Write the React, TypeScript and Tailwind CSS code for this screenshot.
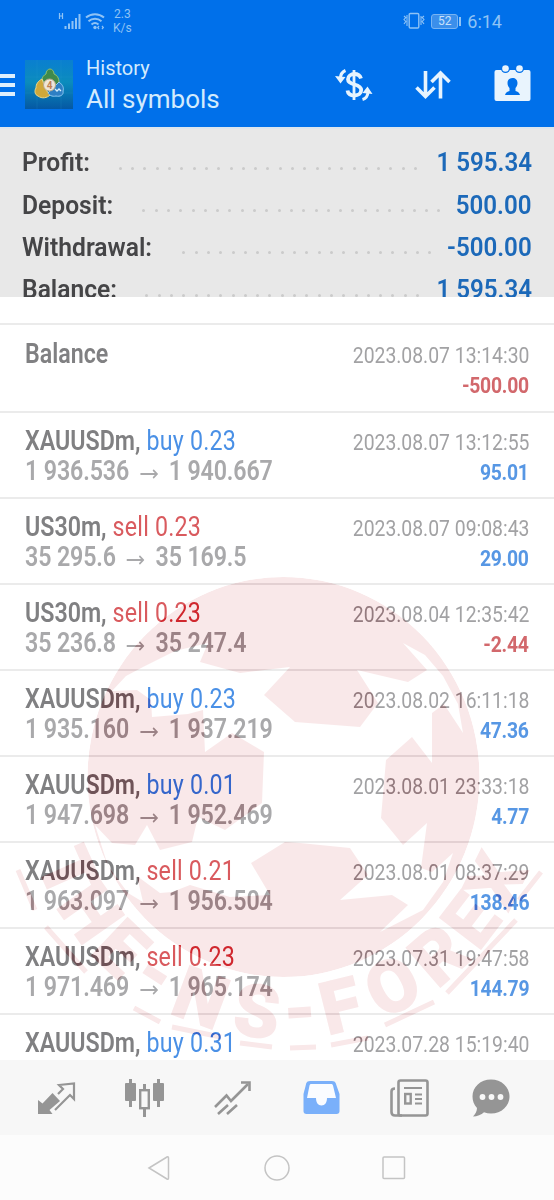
import type { ReactNode } from "react";

const summary = [
  { label: "Profit:", value: "1 595.34", dots: 25, end: "mr-[16px]" },
  { label: "Deposit:", value: "500.00", dots: 25, end: "mr-[13px]" },
  { label: "Withdrawal:", value: "-500.00", dots: 21, end: "mr-[13px]" },
  { label: "Balance:", value: "1 595.34", dots: 23, end: "mr-[14px]" },
];

type Deal = {
  symbol: string;
  side?: "buy" | "sell";
  volume?: string;
  from?: string;
  to?: string;
  time: string;
  profit?: string;
};

const deals: Deal[] = [
  { symbol: "Balance", time: "2023.08.07 13:14:30", profit: "-500.00" },
  { symbol: "XAUUSDm,", side: "buy", volume: "0.23", from: "1 936.536", to: "1 940.667", time: "2023.08.07 13:12:55", profit: "95.01" },
  { symbol: "US30m,", side: "sell", volume: "0.23", from: "35 295.6", to: "35 169.5", time: "2023.08.07 09:08:43", profit: "29.00" },
  { symbol: "US30m,", side: "sell", volume: "0.23", from: "35 236.8", to: "35 247.4", time: "2023.08.04 12:35:42", profit: "-2.44" },
  { symbol: "XAUUSDm,", side: "buy", volume: "0.23", from: "1 935.160", to: "1 937.219", time: "2023.08.02 16:11:18", profit: "47.36" },
  { symbol: "XAUUSDm,", side: "buy", volume: "0.01", from: "1 947.698", to: "1 952.469", time: "2023.08.01 23:33:18", profit: "4.77" },
  { symbol: "XAUUSDm,", side: "sell", volume: "0.21", from: "1 963.097", to: "1 956.504", time: "2023.08.01 08:37:29", profit: "138.46" },
  { symbol: "XAUUSDm,", side: "sell", volume: "0.23", from: "1 971.469", to: "1 965.174", time: "2023.07.31 19:47:58", profit: "144.79" },
  { symbol: "XAUUSDm,", side: "buy", volume: "0.31", time: "2023.07.28 15:19:40" },
];

function StatusBar() {
  return (
    <div className="flex h-[42px] items-center pl-[58px] pr-[52px] text-[#8fc3f5]">
      <svg width="52" height="20" viewBox="0 0 52 20" fill="none" stroke="currentColor">
        <path d="M1.5 2v6M4.5 2v6M1.5 5h3" strokeWidth="1.2" />
        <path d="M7.5 15v3M11 12.5V18M14.5 10v8M18 7v11M21.5 3v15" strokeWidth="2" />
        <path d="M28 6.5a14 14 0 0 1 18 0M30.5 10.2a10 10 0 0 1 13 0M33.5 13.5a5.500 5.500 0 0 1 7 0" strokeWidth="2" />
        <circle cx="37" cy="16.500" r="1.700" fill="currentColor" stroke="none" />
        <path d="M41 15l-1.300 1.500L41 18M44 15l1.300 1.500L44 18" strokeWidth="1.200" />
      </svg>
      <div className="ml-[3px] text-[12px] leading-[14px]">
        <div className="pl-px">2.3</div>
        <div>K/s</div>
      </div>
      <div className="flex-1" />
      <svg width="22" height="18" viewBox="0 0 22 18" fill="none" stroke="currentColor" strokeWidth="1.400">
        <rect x="6.200" y="1.500" width="9.600" height="14.500" rx="1.200" />
        <path d="M1 4l1.800 1.500L1 7.500l1.800 2L1 12M4 3v11M21 4l-1.800 1.500 1.800 2-1.800 2L21 12M18 4v9" strokeWidth="1.100" />
      </svg>
      <div className="ml-[6px] flex items-center">
        <div className="flex h-[15px] w-[27px] items-center justify-center rounded-[3px] border border-[#78b4f3] bg-[#3b8feb] text-[12px] leading-none text-[#c8e2fb]">
          52
        </div>
        <div className="ml-[1px] h-[9px] w-[2px] bg-[#8fc3f5]" />
      </div>
      <span className="ml-[6px] text-[18px]">6:14</span>
    </div>
  );
}

function AppLogo() {
  return (
    <svg width="48" height="49" viewBox="0 0 48 49">
      <defs>
        <linearGradient id="logo-bg" x1="0" y1="0" x2="0" y2="1">
          <stop offset="0" stopColor="#0a7fd0" />
          <stop offset="0.45" stopColor="#0b8cbd" />
          <stop offset="1" stopColor="#0558a3" />
        </linearGradient>
      </defs>
      <rect width="48" height="49" fill="url(#logo-bg)" />
      <path d="M0 17h48M0 33h48M12 0v49M36 0v49" stroke="#2d9fd3" strokeWidth="0.5" opacity="0.35" />
      <path d="M17 20c0-3 2-5 4-6 0-3 2-5 4-5s4 2 4 5c3 1 5 4 5 8l-4 5-9-4z" fill="#3f8a4b" stroke="#8fc06f" strokeWidth="1" />
      <path d="M17 19c-4 2-6 5-6 9-2 3-1 7 2 8 4 3 9 2 12-1l-4-5z" fill="#cfa83a" stroke="#ecd98a" strokeWidth="1" />
      <path d="M34 22c4 3 5 6 4 9 1 4-3 6-7 5-4 1-7-1-8-3l6-6z" fill="#2e7fc4" stroke="#8ec9f2" strokeWidth="1" />
      <circle cx="24.500" cy="25" r="6" fill="#efe6d8" stroke="#b9a98c" strokeWidth="1" />
      <text x="24.500" y="28.500" textAnchor="middle" fontSize="10" fontWeight="700" fill="#c08055">4</text>
      <path d="M30 29l2 2 2-2 2 2" stroke="#d7effc" strokeWidth="1.300" fill="none" />
    </svg>
  );
}

function Header() {
  return (
    <header className="h-[127px] bg-[#0070ea]">
      <StatusBar />
      <div className="flex h-[85px] items-center">
        <div className="mt-px flex w-[15px] flex-col gap-[5px]">
          <div className="h-1 bg-[#deeffd]" />
          <div className="h-1 bg-[#deeffd]" />
          <div className="h-1 bg-[#deeffd]" />
        </div>
        <div className="ml-[10px]">
          <AppLogo />
        </div>
        <div className="ml-[13px] flex flex-1 flex-col whitespace-nowrap text-[#d3ebfd]">
          <span className="text-[20px] leading-[28px]">History</span>
          <span className="text-[26px] leading-[34px]">All symbols</span>
        </div>
        <svg className="mr-[42px]" width="38" height="34" viewBox="0 0 38 34" fill="none" stroke="#e6f3fe">
          <path d="M26 10.500c-1-3-3.500-4.500-6.500-4.500-3.500 0-6.500 2-6.500 5.200 0 3.300 3 4.300 6.500 5.300 3.600 1 6.700 2 6.700 5.600 0 3.400-3 5.400-6.700 5.400-3.700 0-6.500-1.800-7-5" strokeWidth="3.800" />
          <path d="M19 2v30" strokeWidth="2.800" />
          <path d="M10.500 2.500C7 4 5.500 6.500 5.300 10.500M27.500 31.500c3.500-1 5.300-3.500 5.500-7.500" strokeWidth="3" />
          <path d="M0 8l10.500 1-5 6.500zM27.500 25l10 1-5-7.500z" fill="#e6f3fe" stroke="none" />
        </svg>
        <svg className="mr-[43px]" width="36" height="32" viewBox="0 0 36 32" fill="none" stroke="#e6f3fe" strokeWidth="3.600">
          <path d="M10.500 2v26M1.500 18.500l9 9 9-9M25.500 29.500V4M16.500 13l9-9 9 9" />
        </svg>
        <svg className="mr-[23px] -mt-1" width="37" height="37" viewBox="0 0 37 37">
          <rect x="0.500" y="6" width="36" height="31" rx="2" fill="#e9f4fd" />
          <circle cx="11.500" cy="4.500" r="4.600" fill="#0070ea" />
          <circle cx="25.500" cy="4.500" r="4.600" fill="#0070ea" />
          <circle cx="11.500" cy="4.500" r="3.300" fill="#e9f4fd" />
          <circle cx="25.500" cy="4.500" r="3.300" fill="#e9f4fd" />
          <path d="M18.500 14c3 0 5 2 5 5 0 2-.8 3.800-2 5v3c2 .5 4 1.500 4.500 4H11c.5-2.500 2.500-3.500 4.500-4v-3c-1.200-1.200-2-3-2-5 0-3 2-5 5-5z" fill="#0070ea" />
        </svg>
      </div>
    </header>
  );
}

function Summary() {
  return (
    <section className="h-[170px] overflow-hidden border-t-2 border-[#dde6ee] bg-[#e8e8e8] pl-[22px] pr-[22px] pt-[13px]">
      {summary.map((row) => (
        <div key={row.label} className="flex h-[42.3px] items-center whitespace-nowrap text-[25px] font-semibold">
          <span className="origin-left scale-x-[0.985] text-[#454547]">{row.label}</span>
          <div className={`ml-auto mt-[10px] flex gap-[9.3px] ${row.end}`}>
            {Array.from({ length: row.dots }, (_, i) => (
              <span key={i} className="size-[3px] rounded-full bg-[#cbcbcb]" />
            ))}
          </div>
          <span className="origin-right scale-x-[0.965] text-[#1c69b9]">{row.value}</span>
        </div>
      ))}
    </section>
  );
}

// Roboto squeezed horizontally, anchored on either side
function Narrow({ right, children }: { right?: boolean; children: ReactNode }) {
  return (
    <div className={right ? "origin-right scale-x-[0.86]" : "origin-left scale-x-[0.86]"}>{children}</div>
  );
}

function DealRow({ deal, first }: { deal: Deal; first: boolean }) {
  const loss = deal.profit?.startsWith("-");
  return (
    <div
      className={`flex justify-between whitespace-nowrap border-t-2 border-[#ebebeb] pl-[25px] pr-[25px] ${first ? "h-[88px] pt-[14px]" : "h-[86px] pt-[12.5px]"}`}
    >
      <div className="w-[280px] text-[27px] leading-[30px]">
        <Narrow>
          <span className="font-semibold text-[#808082]">{deal.symbol}</span>
          {deal.side && (
            <span className={deal.side === "buy" ? "tracking-[0.25px] text-[#4a90e6]" : "tracking-[0.25px] text-[#d95a5e]"}>
              {" "}
              {deal.side} {deal.volume}
            </span>
          )}
        </Narrow>
        {deal.from && (
          <Narrow>
            <div className="flex items-center font-semibold text-[#a9a9ab]">
              <span className="tracking-[-0.15px]">{deal.from}</span>
              <svg className="mx-[12.5px] mt-[6px] shrink-0" width="21" height="10" viewBox="0 0 21 10" fill="none" stroke="currentColor" strokeWidth="1.800">
                <path d="M0 5h19.500M15 1l4.500 4-4.500 4" />
              </svg>
              <span className="tracking-[-0.15px]">{deal.to}</span>
            </div>
          </Narrow>
        )}
      </div>
      <div className="w-[180px] pt-px text-right text-[22.5px] leading-[30px] text-[#a2a2a4]">
        <div className="flex justify-end">
          <Narrow right>{deal.time}</Narrow>
        </div>
        {deal.profit && (
          <div className="flex justify-end">
            <Narrow right>
              <span className={loss ? "font-bold tracking-[-0.3px] text-[#d2686c]" : "font-bold tracking-[-0.3px] text-[#5797e4]"}>
                {deal.profit}
              </span>
            </Narrow>
          </div>
        )}
      </div>
    </div>
  );
}

const arcLetters = [
  { char: "T", angle: -66 },
  { char: "H", angle: -55 },
  { char: "E", angle: -43.5 },
  { char: "-", angle: -33 },
  { char: "N", angle: -20.5 },
  { char: "S", angle: -6.5 },
  { char: "-", angle: 4 },
  { char: "F", angle: 14 },
  { char: "O", angle: 27.5 },
  { char: "R", angle: 41 },
  { char: "E", angle: 52.5 },
  { char: "X", angle: 64 },
];

// Football stamp with lettering set round its lower half
function Stamp({ blend, color, id }: { blend: string; color: string; id: string }) {
  return (
    <svg
      className={`pointer-events-none absolute left-0 top-[237px] ${blend}`}
      width="554"
      height="500"
      viewBox="0 560 554 500"
      fill={color}
    >
      <mask id={id} maskUnits="userSpaceOnUse" x="0" y="560" width="554" height="500">
        <ellipse cx="283.500" cy="777" rx="196" ry="200" fill="#fff" />
        <path
          fill="#000"
          d="M112 691L126 676 143 667 175 651 208 643 200 662 240 673 290 667 264 695 295 722 360 727 378 703 357 670 408 682 427 670 403 643 425 655 443 676 458 704 463 733 444 704 432 713 432 763 412 737 386 760 381 818 403 845 427 823 421 868 432 872 453 853 443 882 423 910 380 932 408 905 392 895 340 900 368 875 350 848 300 843 285 842 251 863 270 895 230 897 190 885 172 892 160 893 137 876 143 902 128 893 108 866 95 825 112 843 135 845 147 825 160 850 192 842 198 817 225 830 262 803 264 752 232 733 205 752 203 710 188 714 152 717 151 700 137 690z"
        />
      </mask>
      <ellipse cx="283.500" cy="777" rx="196" ry="200" mask={`url(#${id})`} />
      {arcLetters.map((l, i) => (
        <text
          key={i}
          x="283.500"
          y={l.char === "-" ? 1035 : 1038}
          textAnchor="middle"
          fontSize="72"
          fontWeight="800"
          stroke={color}
          strokeWidth="2"
          transform={`rotate(${-l.angle} 283.500 777)`}
        >
          {l.char}
        </text>
      ))}
      <path
        d="M18 870L35 910M46 927L86 972M134 1008L160 1022M172 1027L221 1037M240 1043L272 1047M290 1048L316 1047M331 1045L368 1038M385 1025L434 1002M447 993L516 920M519 900L541 872"
        stroke={color}
        strokeWidth="5"
        fill="none"
      />
    </svg>
  );
}

function BottomTabs() {
  return (
    <nav className="flex h-[75px] items-center bg-[#f7f7f7] pl-[37px] text-[#959595]">
      <svg className="mr-[49px]" width="39" height="36" viewBox="0 0 39 36">
        <path d="M1 34V20l4.500 3.500L15.500 13l7.500 8-10.500 9 3 4z" fill="currentColor" />
        <path d="M21 14l5-5-4-4L37 3.500V19l-4-4-15 15" fill="none" stroke="currentColor" strokeWidth="2.200" />
      </svg>
      <svg className="mr-[50px]" width="39" height="38" viewBox="0 0 39 38">
        <path d="M5.500 0v28M33.500 0v28M19.500 5v33" stroke="currentColor" strokeWidth="3" />
        <rect x="0" y="4" width="11" height="18" rx="1" fill="currentColor" />
        <rect x="28" y="4" width="11" height="18" rx="1" fill="currentColor" />
        <rect x="15.200" y="11.200" width="8.600" height="18" fill="#f7f7f7" stroke="currentColor" strokeWidth="2.400" />
      </svg>
      <svg className="mr-[51px]" width="37" height="36" viewBox="0 0 37 36" fill="none" stroke="currentColor" strokeWidth="2.600">
        <path d="M1 27L12.500 15.500 17 21 34 4M4 34l10-9M13 34l10-9" />
        <path d="M27 2.500h8.500V11" />
      </svg>
      <svg className="mr-[50px]" width="38" height="35" viewBox="0 0 38 35">
        <path d="M8 1h22c2 0 3 .7 3.800 2.500L37.500 14v17c0 2-1 3-3 3H4.500c-2 0-3-1-3-3V14L4.200 3.500C5 1.700 6 1 8 1z" fill="#7ab0fa" />
        <path d="M9.500 4h19.500c1 0 1.600.4 2 1.500L34 18H25c0 4.500-2 7.500-5.500 7.500S14 22.500 14 18H5L7.500 5.500C7.900 4.400 8.500 4 9.500 4z" fill="#fafcff" />
      </svg>
      <svg className="mr-[43px]" width="39" height="38" viewBox="0 0 39 38" fill="none" stroke="currentColor" strokeWidth="2.600">
        <rect x="8.500" y="1.500" width="29" height="35" rx="2" />
        <path d="M5 9.500C2.500 9.500 1.500 10.500 1.500 12.500V33c0 2 1 3.500 3.500 3.500h7" />
        <path d="M14 9h18M25 15.500h7M25 20h7M25 24.500h7" strokeWidth="2.200" />
        <rect x="15.200" y="15" width="5.500" height="9.500" strokeWidth="2.400" />
      </svg>
      <svg width="38" height="38" viewBox="0 0 38 38">
        <path d="M19 .5C29.500.5 37.500 8 37.500 17.500S29.500 34.500 19 34.500c-2.500 0-4.800-.4-7-1.200C9.500 36 5 37.500 1 37.500c2.500-2.500 4-5.500 4-8.500C2 26 .5 22 .5 17.500.5 8 8.500.5 19 .5z" fill="currentColor" />
        <circle cx="10.500" cy="18" r="2.900" fill="#f7f7f7" />
        <circle cx="19.500" cy="18" r="2.900" fill="#f7f7f7" />
        <circle cx="28.500" cy="18" r="2.900" fill="#f7f7f7" />
      </svg>
    </nav>
  );
}

function SystemNav() {
  return (
    <div className="flex h-[65px] items-center gap-[91px] bg-[#fcfcfc] pl-[147px]">
      <svg width="26" height="26" viewBox="0 0 26 26" fill="none" stroke="#c4c4c4" strokeWidth="1.500">
        <path d="M2 13L20 2q1.500-.8 1.500 1v20q0 1.800-1.500 1z" />
      </svg>
      <svg width="26" height="26" viewBox="0 0 26 26" fill="none" stroke="#c4c4c4" strokeWidth="1.500">
        <circle cx="13" cy="13" r="12" />
      </svg>
      <svg width="26" height="26" viewBox="0 0 26 26" fill="none" stroke="#c4c4c4" strokeWidth="1.500">
        <rect x="2" y="2" width="21.500" height="21.500" rx="1" />
      </svg>
    </div>
  );
}

export default function App() {
  return (
    <div className="h-[1200px] w-[554px] overflow-hidden bg-white font-['Roboto',sans-serif]">
      <Header />
      <Summary />
      <div className="h-[26px]" />
      <main className="relative isolate h-[737px] overflow-hidden bg-white">
        {deals.map((deal, i) => (
          <DealRow key={deal.time} deal={deal} first={i === 0} />
        ))}
        <Stamp id="stamp-burn" blend="mix-blend-color-burn" color="#e6c6c8" />
        <Stamp id="stamp-tint" blend="mix-blend-multiply" color="#f9e8e9" />
      </main>
      <BottomTabs />
      <SystemNav />
    </div>
  );
}
